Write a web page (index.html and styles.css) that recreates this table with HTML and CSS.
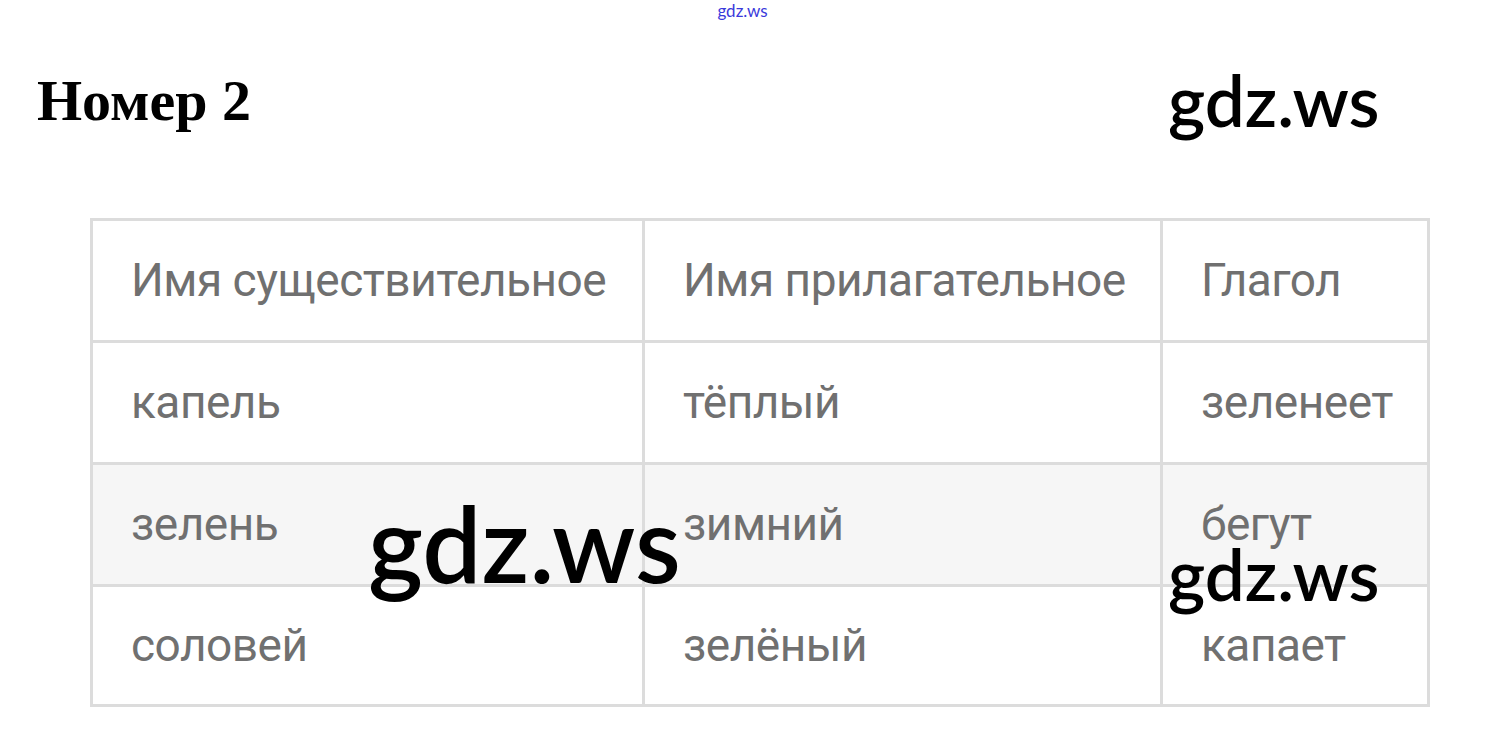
FILE: index.html
```html
<!DOCTYPE html>
<html lang="ru">
<head>
    <meta charset="UTF-8">
    <title>Номер 2</title>
    <link rel="stylesheet" href="styles.css">
</head>
<body>
    <div class="page">
        <a class="toplink" href="#">gdz.ws</a>
        <h1 class="title">Номер 2</h1>

        <table class="answer">
            <tr>
                <td class="c1">Имя существительное</td>
                <td class="c2">Имя прилагательное</td>
                <td class="c3">Глагол</td>
            </tr>
            <tr>
                <td>капель</td>
                <td>тёплый</td>
                <td>зеленеет</td>
            </tr>
            <tr class="striped">
                <td>зелень</td>
                <td>зимний</td>
                <td>бегут</td>
            </tr>
            <tr>
                <td class="last">соловей</td>
                <td class="last">зелёный</td>
                <td class="last">капает</td>
            </tr>
        </table>

        <span class="mark mark-top">gdz.ws</span>
        <span class="mark mark-big">gdz.ws</span>
        <span class="mark mark-side">gdz.ws</span>
    </div>
</body>
</html>
```

FILE: styles.css
```css
body { margin: 0; background: #fff; }
.page { position: relative; width: 1485px; height: 734px; overflow: hidden; }
.toplink { display: block; text-align: center; font-family: Lato, sans-serif; font-size: 17px; color: #3a3adb; text-decoration: none; padding-top: 2px; line-height: 18px; }
.title { font-family: "Liberation Serif", serif; font-weight: bold; font-size: 58px; line-height: 66px; margin: 48px 0 0 37px; color: #000; }

.answer { border-collapse: collapse; margin: 84px 0 0 90px; font-family: Roboto, sans-serif; font-size: 46px; letter-spacing: -0.5px; color: #707070; }
.answer td { border: 3px solid #dcdcdc; height: 122px; padding: 0 0 2px 38px; vertical-align: middle; white-space: nowrap; box-sizing: border-box; }
.answer td.last { height: 120px; }
.answer .c1 { width: 552px; }
.answer .c2 { width: 518px; }
.answer .c3 { width: 267px; }
.striped td { background: #f6f6f6; }

.mark { position: absolute; font-family: Lato, sans-serif; font-weight: 600; color: #000; line-height: 1; white-space: nowrap; }
.mark-top { left: 1168px; top: 64px; font-size: 71px; }
.mark-big { left: 368px; top: 490px; font-size: 105px; }
.mark-side { left: 1168px; top: 538px; font-size: 71px; }
```
